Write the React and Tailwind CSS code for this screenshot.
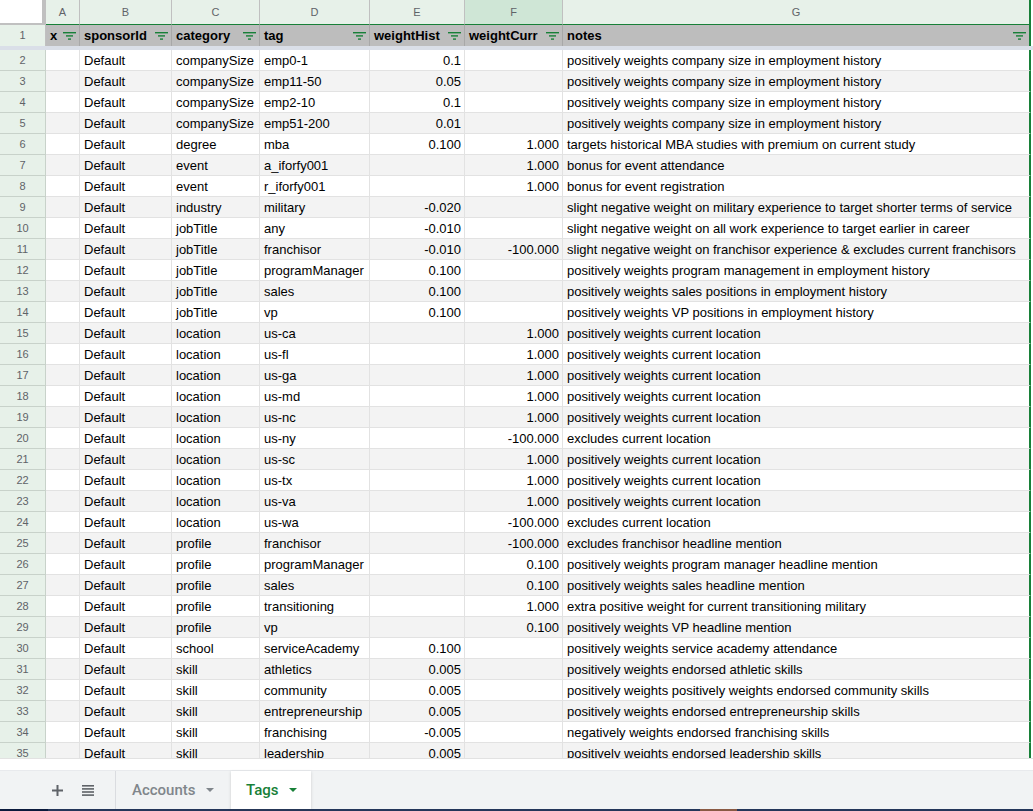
import React from 'react';

const cols = [
  { letter: 'A', title: 'x', w: 'w-[34px]' },
  { letter: 'B', title: 'sponsorId', w: 'w-[92px]' },
  { letter: 'C', title: 'category', w: 'w-[88px]' },
  { letter: 'D', title: 'tag', w: 'w-[110px]' },
  { letter: 'E', title: 'weightHist', w: 'w-[95px]', num: true },
  { letter: 'F', title: 'weightCurr', w: 'w-[98px]', num: true, active: true },
  { letter: 'G', title: 'notes', w: 'w-[468px]', last: true },
];

const cs = 'positively weights company size in employment history';
const loc = 'positively weights current location';

// [category, tag, weightHist, weightCurr, notes]
const rows = [
  ['companySize', 'emp0-1', '0.1', '', cs],
  ['companySize', 'emp11-50', '0.05', '', cs],
  ['companySize', 'emp2-10', '0.1', '', cs],
  ['companySize', 'emp51-200', '0.01', '', cs],
  ['degree', 'mba', '0.100', '1.000', 'targets historical MBA studies with premium on current study'],
  ['event', 'a_iforfy001', '', '1.000', 'bonus for event attendance'],
  ['event', 'r_iforfy001', '', '1.000', 'bonus for event registration'],
  ['industry', 'military', '-0.020', '', 'slight negative weight on military experience to target shorter terms of service'],
  ['jobTitle', 'any', '-0.010', '', 'slight negative weight on all work experience to target earlier in career'],
  ['jobTitle', 'franchisor', '-0.010', '-100.000', 'slight negative weight on franchisor experience & excludes current franchisors'],
  ['jobTitle', 'programManager', '0.100', '', 'positively weights program management in employment history'],
  ['jobTitle', 'sales', '0.100', '', 'positively weights sales positions in employment history'],
  ['jobTitle', 'vp', '0.100', '', 'positively weights VP positions in employment history'],
  ['location', 'us-ca', '', '1.000', loc],
  ['location', 'us-fl', '', '1.000', loc],
  ['location', 'us-ga', '', '1.000', loc],
  ['location', 'us-md', '', '1.000', loc],
  ['location', 'us-nc', '', '1.000', loc],
  ['location', 'us-ny', '', '-100.000', 'excludes current location'],
  ['location', 'us-sc', '', '1.000', loc],
  ['location', 'us-tx', '', '1.000', loc],
  ['location', 'us-va', '', '1.000', loc],
  ['location', 'us-wa', '', '-100.000', 'excludes current location'],
  ['profile', 'franchisor', '', '-100.000', 'excludes franchisor headline mention'],
  ['profile', 'programManager', '', '0.100', 'positively weights program manager headline mention'],
  ['profile', 'sales', '', '0.100', 'positively weights sales headline mention'],
  ['profile', 'transitioning', '', '1.000', 'extra positive weight for current transitioning military'],
  ['profile', 'vp', '', '0.100', 'positively weights VP headline mention'],
  ['school', 'serviceAcademy', '0.100', '', 'positively weights service academy attendance'],
  ['skill', 'athletics', '0.005', '', 'positively weights endorsed athletic skills'],
  ['skill', 'community', '0.005', '', 'positively weights positively weights endorsed community skills'],
  ['skill', 'entrepreneurship', '0.005', '', 'positively weights endorsed entrepreneurship skills'],
  ['skill', 'franchising', '-0.005', '', 'negatively weights endorsed franchising skills'],
  ['skill', 'leadership', '0.005', '', 'positively weights endorsed leadership skills'],
];

function FilterIcon() {
  return (
    <svg width="13" height="8" viewBox="0 0 13 8" className="shrink-0">
      <rect x="0" y="0" width="13" height="1.4" fill="#188038" />
      <rect x="3" y="3.2" width="7" height="1.4" fill="#188038" />
      <rect x="5" y="6.4" width="3" height="1.4" fill="#188038" />
    </svg>
  );
}

function Caret({ color }) {
  return (
    <svg width="8" height="4" viewBox="0 0 8 4">
      <path d="M0 0h8L4 4z" fill={color} />
    </svg>
  );
}

export default function App() {
  return (
    <div className="w-[1033px] h-[811px] overflow-hidden bg-white font-['Liberation_Sans',Arial,sans-serif] text-black">
      {/* Grid */}
      <div className="h-[758px] overflow-hidden">
        {/* Column letters */}
        <div className="flex h-[25px]">
          <div className="w-[46px] h-full bg-white border-r-4 border-b-2 border-[#c0c0c0]" />
          {cols.map((c) => (
            <div
              key={c.letter}
              className={`${c.w} h-full flex items-center justify-center pt-[1px] text-[11px] text-[#5f6368] border-b border-b-[#188038] ${c.active ? 'bg-[#cfe6d6]' : 'bg-[#e7f1e9]'} ${c.last ? 'border-r-2 border-r-[#188038]' : 'border-r border-r-[#c0c0c0]'}`}
            >
              {c.letter}
            </div>
          ))}
        </div>

        {/* Header row 1 */}
        <div className="flex h-[21px]">
          <div className="w-[46px] h-full flex items-center justify-center text-[11px] text-[#5f6368] bg-[#e7f1e9] border-r border-[#c0c0c0]">
            1
          </div>
          {cols.map((c) => (
            <div
              key={c.letter}
              className={`${c.w} h-full flex items-center justify-between pl-[4px] pr-[3px] bg-[#bdbdbd] font-bold text-[13px] whitespace-nowrap overflow-hidden ${c.last ? 'border-r-2 border-r-[#188038]' : 'border-r border-r-[#a8a8a8]'}`}
            >
              <span>{c.title}</span>
              <FilterIcon />
            </div>
          ))}
        </div>
        <div className="h-[4px] bg-[#dadfe8]" />

        {/* Data rows */}
        {rows.map((r, i) => {
          const n = i + 2;
          const odd = n % 2 === 1;
          const values = ['', 'Default', r[0], r[1], r[2], r[3], r[4]];
          return (
            <div key={n} className="flex h-[21px]">
              <div className="w-[46px] h-full flex items-center justify-center pt-[1px] text-[11px] text-[#5f6368] bg-[#e7f1e9] border-r border-b border-[#c8d2ca]">
                {n}
              </div>
              {cols.map((c, j) => (
                <div
                  key={c.letter}
                  className={`${c.w} h-full flex items-end pb-[2px] ${c.num ? 'justify-end pl-[3px] pr-[3px]' : 'pl-[4px] pr-[3px]'} text-[13px] leading-[15px] whitespace-nowrap overflow-hidden border-b border-b-[#e2e2e2] ${odd ? 'bg-[#f3f3f3]' : 'bg-white'} ${c.last ? 'border-r-2 border-r-[#188038]' : 'border-r border-r-[#e2e2e2]'}`}
                >
                  {values[j]}
                </div>
              ))}
            </div>
          );
        })}
      </div>

      {/* Strip under grid */}
      <div className="h-[12px] bg-white border-t border-[#e2e2e2]" />

      {/* Sheet tabs */}
      <div className="flex h-[39px] bg-[#f1f3f4] border-t border-[#e8eaed] font-['Roboto',Arial,sans-serif]">
        <div className="w-[116px] h-full flex items-center pl-[52px] gap-[19px] border-r border-[#dadce0]">
          <svg width="11" height="11" viewBox="0 0 11 11">
            <path d="M5.5 0v11M0 5.5h11" stroke="#5f6368" strokeWidth="2" />
          </svg>
          <svg width="12" height="11" viewBox="0 0 12 11">
            <rect x="0" y="0" width="12" height="1.6" fill="#5f6368" />
            <rect x="0" y="3.1" width="12" height="1.6" fill="#5f6368" />
            <rect x="0" y="6.2" width="12" height="1.6" fill="#5f6368" />
            <rect x="0" y="9.3" width="12" height="1.6" fill="#5f6368" />
          </svg>
        </div>
        <div className="w-[115px] h-full flex items-center pl-[16px] gap-[10px] text-[15px] font-medium text-[#80868b]">
          <span>Accounts</span>
          <Caret color="#80868b" />
        </div>
        <div className="w-[80px] h-full flex items-center pl-[15px] gap-[11px] bg-white text-[15px] font-medium text-[#188038] shadow-[0_1px_3px_rgba(60,64,67,0.2)]">
          <span>Tags</span>
          <Caret color="#188038" />
        </div>
      </div>

      {/* Bottom edge */}
      <div className="flex h-[2px] bg-[#24365a]">
        <div className="w-[48px] bg-[#0b1a3c]" />
        <div className="w-[652px]" />
        <div className="w-[37px] bg-[#8a5a44]" />
      </div>
    </div>
  );
}
